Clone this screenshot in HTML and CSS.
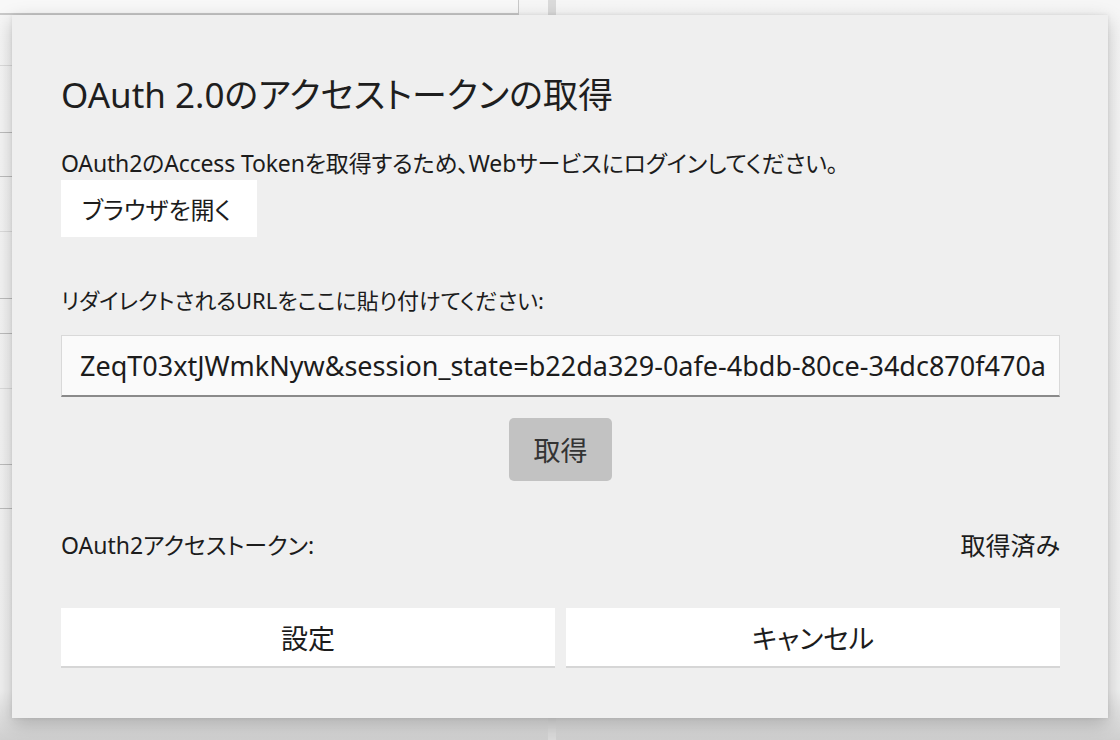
FILE: index.html
```html
<!DOCTYPE html>
<html lang="ja">
<head>
<meta charset="utf-8">
<title>OAuth 2.0</title>
<link rel="stylesheet" href="styles.css">
</head>
<body>
<div class="page">
  <div class="left-col">
    <div class="top-card"></div>
    <div class="rows">
      <div class="row r1"></div>
      <div class="row r2"></div>
      <div class="row r3"></div>
      <div class="row r4"></div>
      <div class="row r5"></div>
      <div class="row r6"></div>
      <div class="row r7"></div>
      <div class="row r8"></div>
      <div class="row r9"></div>
    </div>
  </div>
  <div class="divider"></div>
  <div class="right-col"></div>

  <div class="dialog">
    <h1 class="title">OAuth 2.0のアクセストークンの取得</h1>
    <p class="desc">OAuth2のAccess Tokenを取得するため、Webサービスにログインしてください。</p>
    <button class="btn-open">ブラウザを開く</button>
    <p class="label">リダイレクトされるURLをここに貼り付けてください:</p>
    <div class="url-box"><span class="url-text">ZeqT03xtJWmkNyw&amp;session_state=b22da329-0afe-4bdb-80ce-34dc870f470a</span></div>
    <div class="get-wrap"><button class="btn-get">取得</button></div>
    <div class="token-row">
      <span>OAuth2アクセストークン:</span>
      <span class="token-status">取得済み</span>
    </div>
    <div class="actions">
      <button class="btn-action">設定</button>
      <button class="btn-action">キャンセル</button>
    </div>
  </div>
</div>
</body>
</html>
```

FILE: styles.css
```css
html, body {
  margin: 0;
  padding: 0;
}
body {
  width: 1120px;
  height: 740px;
  overflow: hidden;
  background: #d2d2d2;
  font-family: "Noto Sans", "Noto Sans CJK JP", sans-serif;
  font-feature-settings: "palt" 1;
  color: #1c1c1c;
}
.page {
  position: relative;
  width: 1120px;
  height: 740px;
  display: flex;
  background: linear-gradient(to bottom, #f6f6f6 0, #f1f1f1 690px, #cfcfcf 740px);
}
.left-col {
  width: 548px;
  display: flex;
  flex-direction: column;
}
.top-card {
  width: 518px;
  height: 13px;
  background: #f8f8f8;
  border-right: 1px solid #c9c9c9;
  border-bottom: 2px solid #c9c9c9;
}
.rows {
  display: flex;
  flex-direction: column;
}
.row {
  width: 12px;
  border-bottom: 1px solid #bdbdbd;
}
.r1 { height: 50px; border-bottom-color: #dcdcdc; }
.r2 { height: 66px; }
.r3 { height: 43px; }
.r4 { height: 54px; border-bottom-color: #dcdcdc; }
.r5 { height: 66px; }
.r6 { height: 34px; }
.r7 { height: 54px; border-bottom-color: #dcdcdc; }
.r8 { height: 75px; }
.r9 { height: 43px; }
.divider {
  width: 8px;
  background: #dadada;
}
.right-col {
  flex: 1;
}
.dialog {
  position: absolute;
  left: 12px;
  top: 15px;
  width: 1096px;
  height: 703px;
  box-sizing: border-box;
  padding: 60px 48px 0 49px;
  background: #efefef;
  box-shadow: 0 6px 18px rgba(0, 0, 0, 0.22), 0 0 4px rgba(0, 0, 0, 0.08);
  display: flex;
  flex-direction: column;
}
.title {
  margin: 0;
  font-size: 35px;
  line-height: 40px;
  font-weight: 400;
  color: #1e1e1e;
}
.desc {
  margin: 36px 0 0;
  font-size: 23px;
  line-height: 24px;
  letter-spacing: -0.15px;
}
.btn-open {
  margin-top: 5px;
  align-self: flex-start;
  width: 196px;
  height: 57px;
  border: none;
  background: #ffffff;
  font-family: inherit;
  font-feature-settings: "palt" 1;
  font-size: 24px;
  color: #1c1c1c;
  text-align: left;
  padding: 0 0 0 21px;
}
.label {
  margin: 51px 0 0;
  font-size: 22px;
  line-height: 24px;
}
.url-box {
  margin-top: 23px;
  height: 62px;
  box-sizing: border-box;
  background: #fafafa;
  border: 1px solid #d9d9d9;
  border-bottom: 2px solid #8a8a8a;
  display: flex;
  align-items: center;
  justify-content: flex-end;
  overflow: hidden;
  padding: 0 13px 0 22px;
}
.url-text {
  font-size: 27px;
  white-space: nowrap;
  color: #1c1c1c;
}
.get-wrap {
  margin-top: 21px;
  display: flex;
  justify-content: center;
}
.btn-get {
  width: 103px;
  height: 63px;
  border: none;
  border-radius: 5px;
  background: #c2c2c2;
  font-family: inherit;
  font-size: 27px;
  color: #333333;
}
.token-row {
  margin-top: 52px;
  display: flex;
  justify-content: space-between;
  align-items: center;
  font-size: 23px;
  line-height: 24px;
}
.token-status {
  font-size: 25px;
}
.actions {
  margin-top: 51px;
  display: flex;
  gap: 11px;
}
.btn-action {
  flex: 1;
  height: 60px;
  border: none;
  border-bottom: 2px solid #d6d6d6;
  background: #ffffff;
  font-family: inherit;
  font-feature-settings: "palt" 1;
  font-size: 27px;
  color: #1c1c1c;
}
```
